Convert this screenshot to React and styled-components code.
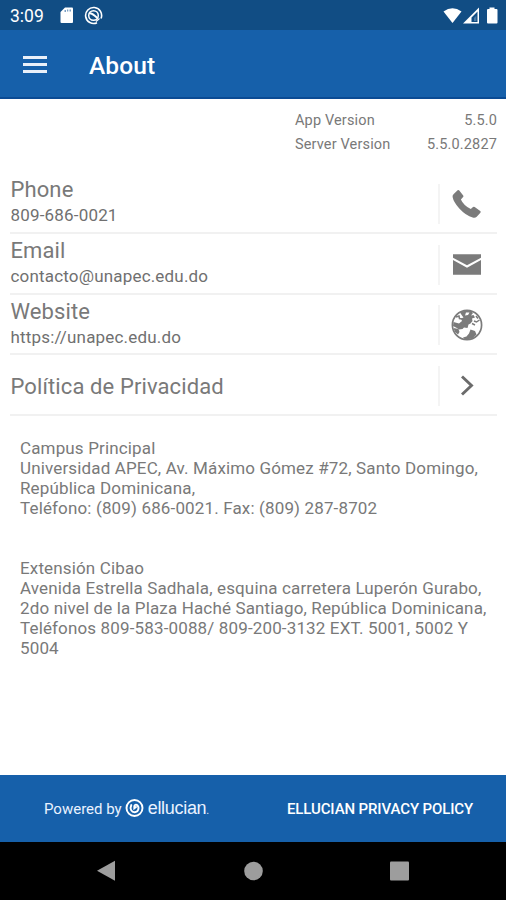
import React from 'react';
import styled, { createGlobalStyle } from 'styled-components';

const contacts = [
  { title: 'Phone', value: '809-686-0021', icon: PhoneIcon },
  { title: 'Email', value: 'contacto@unapec.edu.do', icon: MailIcon },
  { title: 'Website', value: 'https://unapec.edu.do', icon: GlobeIcon },
  { title: 'Política de Privacidad', icon: ChevronIcon },
];

export default function App() {
  return (
    <Screen>
      <GlobalStyle />
      <StatusBar>
        <Clock>3:09</Clock>
        <SdCardIcon />
        <SyncIcon />
        <StatusIcons />
      </StatusBar>
      <AppBar>
        <MenuButton aria-label="Menu">
          <span />
          <span />
          <span />
        </MenuButton>
        <Title>About</Title>
      </AppBar>
      <Content>
        <Versions>
          <dt>App Version</dt>
          <dd>5.5.0</dd>
          <dt>Server Version</dt>
          <dd>5.5.0.2827</dd>
        </Versions>
        <List>
          {contacts.map(({ title, value, icon: Icon }) => (
            <Row key={title}>
              <RowText $single={!value}>
                <RowTitle>{title}</RowTitle>
                {value && <RowValue>{value}</RowValue>}
              </RowText>
              <RowAction>
                <Icon />
              </RowAction>
            </Row>
          ))}
        </List>
        <Address>
          <Line>Campus Principal</Line>
          <Line>Universidad APEC, Av. Máximo Gómez #72, Santo Domingo,</Line>
          <Line>República Dominicana,</Line>
          <Line>Teléfono: (809) 686-0021. Fax: (809) 287-8702</Line>
        </Address>
        <Address>
          <Line>Extensión Cibao</Line>
          <Line>Avenida Estrella Sadhala, esquina carretera Luperón Gurabo,</Line>
          <Line>2do nivel de la Plaza Haché Santiago, República Dominicana,</Line>
          <Line>Teléfonos 809-583-0088/ 809-200-3132 EXT. 5001, 5002 Y</Line>
          <Line>5004</Line>
        </Address>
      </Content>
      <Footer>
        <Powered>
          Powered by
          <EllucianMark />
          <Brand>ellucian<small>.</small></Brand>
        </Powered>
        <Policy>ELLUCIAN PRIVACY POLICY</Policy>
      </Footer>
      <NavBar>
        <svg width="20" height="22" viewBox="0 0 20 22">
          <path d="M19 0.800V20.800L1 10.800Z" />
        </svg>
        <svg width="20" height="22" viewBox="0 0 20 22">
          <circle cx="10.500" cy="11" r="9.300" />
        </svg>
        <svg width="20" height="22" viewBox="0 0 20 22">
          <rect x="1" y="1.500" width="19" height="19" rx="1" />
        </svg>
      </NavBar>
    </Screen>
  );
}

function SdCardIcon() {
  return (
    <SdCard width="14" height="17" viewBox="0 0 14 17">
      <path fill="#fff" d="M5 0.500H12Q13 0.500 13 1.500V15Q13 16 12 16H1.500Q0.500 16 0.500 15V5Z" />
      <path fill="#7b9fc4" d="M4.500 3V5H6V3ZM7 2.500V4.500H8.300V2.500ZM9.500 2.500V4.500H11V2.500Z" />
    </SdCard>
  );
}

function SyncIcon() {
  return (
    <svg width="19" height="19" viewBox="0 0 19 19" fill="none" stroke="#fff">
      <path strokeWidth="1.600" d="M13 16.700A8 8 0 1 1 17 12.500" />
      <circle cx="9.500" cy="9.500" r="4.800" strokeWidth="1.500" />
      <path strokeWidth="2" d="M5 7.200C8 6.800 9.700 8.200 13.300 12" />
      <path strokeWidth="1.300" d="M12 15.500L15.500 12.500" />
    </svg>
  );
}

function StatusIcons() {
  return (
    <Signals width="56" height="18" viewBox="0 0 56 18">
      <path fill="#fff" d="M0.500 4.500Q9.500-2 18.500 4.500L9.500 16Z" />
      <path fill="#fff" fillRule="evenodd" d="M36 0.500V16.500H20ZM34.500 4.500L28.500 10.500V15H34.500Z" />
      <path fill="#fff" d="M31 11L33.300 8.700V14H31Z" opacity="0.250" />
      <path fill="#fff" d="M46.500 0.500H51.500V2H53.500Q54.500 2 54.500 3V15.500Q54.500 16.500 53.500 16.500H45Q44 16.500 44 15.500V3Q44 2 45 2H46.500Z" />
    </Signals>
  );
}

function PhoneIcon() {
  return (
    <svg width="32" height="32" viewBox="0 0 32 32" fill="#7b7b7b">
      <path d="M2.500 6.200L6.600 2.300Q7.500 1.500 8.300 2.400L12.200 7.400Q12.900 8.300 12.100 9.100L9.900 11.400Q12.300 17 19.800 21.100L22 19.100Q22.800 18.300 23.700 18.900L29.200 23Q30.200 23.800 29.400 24.700L25.700 28.800Q24.200 30.100 21.700 29.500Q15 27.900 8.300 20.600Q2.500 14 1.600 9Q1.300 7.200 2.500 6.200Z" />
    </svg>
  );
}

function MailIcon() {
  return (
    <svg width="32" height="32" viewBox="0 0 32 32" fill="#7b7b7b">
      <path d="M2 5.200H30V8.700L16 16.200L2 8.700Z" />
      <path d="M2 11L16 18.700L30 11V25.700H2Z" />
    </svg>
  );
}

function GlobeIcon() {
  return (
    <svg width="32" height="32" viewBox="0 0 32 32">
      <circle cx="16" cy="16" r="14.600" fill="#fff" stroke="#7b7b7b" strokeWidth="1.700" />
      <path
        fill="#7b7b7b"
        d="M9 3.500L13 2L20 2L22 4L20 6.500L22.500 6L24 8.500L21 9.500L21.500 12L19.500 14.500L17.500 15.500L16.500 19L13 18.500L11.500 20L8 20.500L5 18.500L2 17L2.500 13L8 14.500L11 12L10 9.500L12.500 8.500L11 6.500Z"
      />
      <path fill="#7b7b7b" d="M19.500 20.500L24 22L25.500 25.500L21.500 29.500L14 30.500L12 28.500L15.500 27.500L18 24.500Z" />
      <path fill="#7b7b7b" d="M2.500 19L7.500 20L8.500 23L7 25.500L4 23Z" />
      <path fill="none" stroke="#7b7b7b" strokeWidth="1.500" d="M5 8L8 7L8.500 9.500L11 10M23 12L25.500 13L28.500 11M25 7L27 9.500M21 14.500L24 16" />
      <path fill="#fff" d="M15 3.500L18.500 3.500L17 6L14 6.500Z" />
    </svg>
  );
}

function ChevronIcon() {
  return (
    <svg width="32" height="32" viewBox="0 0 32 32" fill="none" stroke="#6b6b6b" strokeWidth="2.900">
      <path d="M11 6.500L20.500 15.500L11 24.500" />
    </svg>
  );
}

function EllucianMark() {
  return (
    <Mark width="19" height="20" viewBox="0 0 19 20" fill="none" stroke="#fff" strokeLinecap="round">
      <circle cx="9.500" cy="10" r="8" strokeWidth="1.900" />
      <path strokeWidth="1.900" d="M6.300 7C4.500 11 6.500 14.300 9.800 14.200C13.300 13.900 14.700 9.500 12.300 7.200C11 6 9.300 6.800 9.300 8.500V10.300L11 9" />
    </Mark>
  );
}

const GlobalStyle = createGlobalStyle`
  body {
    margin: 0;
    background: #fff;
  }
`;

const Screen = styled.div`
  display: flex;
  flex-direction: column;
  width: 506px;
  height: 900px;
  overflow: hidden;
  background: #fff;
  color: #797979;
  font-family: Roboto, sans-serif;
`;

const StatusBar = styled.div`
  display: flex;
  align-items: center;
  height: 30px;
  padding: 1px 7px 0 10px;
  box-sizing: border-box;
  background: #114d84;
  color: #fff;
`;

const Clock = styled.span`
  width: 50px;
  font-size: 17.500px;
`;

const SdCard = styled.svg`
  margin-right: 10px;
`;

const Signals = styled.svg`
  margin-left: auto;
`;

const AppBar = styled.header`
  display: flex;
  align-items: center;
  height: 69px;
  padding: 1px 23px 0;
  box-sizing: border-box;
  border-bottom: 2px solid #0b4b94;
  background: #1660aa;
  color: #fff;
`;

const MenuButton = styled.button`
  display: flex;
  flex-direction: column;
  gap: 4px;
  width: 24px;
  padding: 0;
  border: 0;
  background: none;

  span {
    height: 3px;
    background: #e9f0fa;
  }
`;

const Title = styled.h1`
  margin: 3px 0 0 42px;
  font-size: 24.500px;
  font-weight: 500;
  letter-spacing: 0.1px;
`;

const Content = styled.main`
  flex: 1;
`;

const Versions = styled.dl`
  display: grid;
  grid-template-columns: 1fr auto;
  width: 202px;
  margin: 10px 9px 0 auto;
  font-size: 14.500px;
  line-height: 24px;
  letter-spacing: 0.150px;

  dd {
    margin: 0;
    text-align: right;
  }
`;

const List = styled.div`
  margin: 16px 9px 0 10px;
`;

const Row = styled.div`
  display: flex;
  align-items: center;
  height: 60.750px;
  box-sizing: border-box;
  border-bottom: 2px solid #f1f1f1;
`;

const RowText = styled.div`
  flex: 1;
  padding: ${p => (p.$single ? '3px' : '0')} 0 0 0.500px;
`;

const RowTitle = styled.div`
  font-size: 22px;
  line-height: 27px;
  letter-spacing: 0.110px;
`;

const RowValue = styled.div`
  font-size: 17px;
  line-height: 25px;
  letter-spacing: 0.180px;
  color: #707070;
`;

const RowAction = styled.div`
  display: flex;
  align-items: center;
  justify-content: center;
  width: 59px;
  height: 40px;
  margin-top: 3px;
  padding-right: 3px;
  box-sizing: border-box;
  border-left: 2px solid #f4f4f4;
`;

const Address = styled.address`
  margin: 22px 0 40px 20px;
  font-size: 17px;
  font-style: normal;
  line-height: 20px;

  & + & {
    margin-top: 0;
  }
`;

const Line = styled.div`
  white-space: nowrap;
  letter-spacing: 0.145px;
`;

const Footer = styled.footer`
  display: grid;
  grid-template-columns: 1fr 1fr;
  align-items: center;
  height: 67px;
  background: #1660aa;
  color: #fff;
  font-size: 15px;
`;

const Powered = styled.div`
  display: flex;
  align-items: center;
  padding-left: 44px;
  color: #e9f2ff;
`;

const Mark = styled.svg`
  margin: 0 4px 1px 3px;
`;

const Brand = styled.span`
  font-family: 'Liberation Sans', sans-serif;
  font-size: 18px;
  letter-spacing: -0.3px;

  small {
    font-size: 10px;
  }
`;

const Policy = styled.div`
  padding-left: 34px;
  font-weight: 500;
  letter-spacing: -0.120px;
  white-space: nowrap;
`;

const NavBar = styled.nav`
  display: flex;
  align-items: center;
  justify-content: space-between;
  height: 58px;
  padding: 0 97px 0 96px;
  background: #000;
  fill: #9d9d9d;
`;
